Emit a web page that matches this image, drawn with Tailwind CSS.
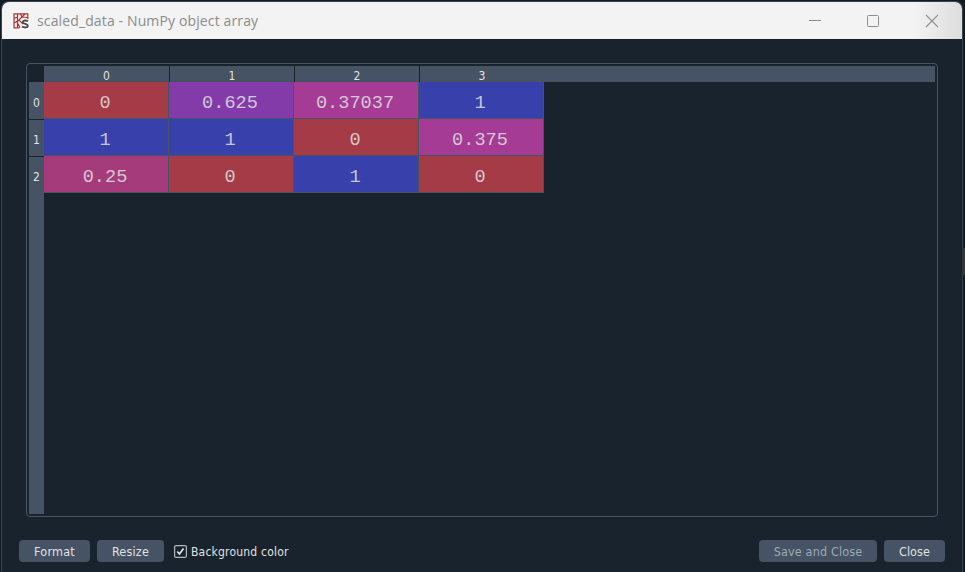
<!DOCTYPE html>
<html lang="en">
<head>
<meta charset="utf-8">
<title>scaled_data - NumPy object array</title>
<script src="https://cdn.jsdelivr.net/npm/@tailwindcss/browser@4"></script>
</head>
<body class="h-[572px] w-[965px] overflow-hidden bg-[#111b25] pt-px pl-px pr-[2px]">
<div class="flex h-[571px] w-[962px] flex-col overflow-hidden rounded-t-lg border border-b-0 border-[#3c424a] bg-[#19232d] font-['DejaVu_Sans_Condensed','DejaVu_Sans',sans-serif] text-[12px] text-[#e0e1e3]">
  <header class="flex h-[37px] shrink-0 items-center bg-linear-to-r from-[#f3f3f3] from-95% to-[#dddddd] pl-[9px]">
    <svg class="size-5 shrink-0" viewBox="0 0 20 20" fill="none">
      <rect width="20" height="20" rx="4" fill="#fafafa"/>
      <path d="M16.8 8V2.8H3V16.8H8.5M6.5 3V16.5M3 7.5L6.5 6M3 12L6.5 10M6.5 10.5L14 3M8 9L12 13M6.5 12L9 16.5M9.5 3L11 6L16.5 6.5" stroke="#b52b31" stroke-width="1.2"/>
      <path d="M17 10.2C14.6 8.9 11.8 9.4 11.8 11.2C11.8 13.2 16.8 12.4 16.8 14.7C16.8 16.8 13.4 16.8 11 15.7" stroke="#4c4c4c" stroke-width="1.9"/>
    </svg>
    <h1 class="ml-[6px] whitespace-nowrap font-['Open_Sans',sans-serif] text-[14px] leading-5 tracking-[.13px] text-[#8c8c8c]">scaled_data - NumPy object array</h1>
    <svg class="ml-auto mr-[24px] h-[14px] w-[130px] shrink-0" viewBox="0 0 130 14" fill="none" stroke="#8e8e8e">
      <path d="M1 6.5H13"/>
      <rect x="59.5" y="1.5" width="11" height="11" rx="1"/>
      <path d="M118 1L130 13M130 1L118 13" stroke-width="1.1"/>
    </svg>
  </header>
  <main class="mt-6 ml-6 flex h-[454px] w-[912px] shrink-0 flex-col rounded-[4px] border border-[#455364] p-[2px]">
    <div class="flex h-4 shrink-0 text-center leading-[20px]">
      <div class="w-[15px]"></div>
      <div class="flex flex-1 bg-[#455364]">
        <div class="w-[126px] border-r border-[#19232d]">0</div>
        <div class="w-[125px] border-r border-[#19232d]">1</div>
        <div class="w-[125px] border-r border-[#19232d]">2</div>
        <div class="w-[124px]">3</div>
      </div>
    </div>
    <div class="flex flex-1">
      <div class="w-[15px] bg-[#455364] text-center leading-[40px]">
        <div class="h-[38px] border-b border-[#19232d] leading-[42px]">0</div>
        <div class="h-[37px] border-b border-[#19232d]">1</div>
        <div class="h-[37px]">2</div>
      </div>
      <div class="grid h-[111px] grid-cols-[repeat(4,125px)] grid-rows-[repeat(3,37px)] text-center font-['Liberation_Mono',monospace] text-[18.6px] leading-[43px] text-[#e0e1e3]/85 *:border-r *:border-b *:border-[#455364] *:pr-[2px]">
        <div class="bg-[#a53b47]">0</div><div class="bg-[#833ba9]">0.625</div><div class="bg-[#a53b95]">0.37037</div><div class="bg-[#3841ab]">1</div>
        <div class="bg-[#3841ab]">1</div><div class="bg-[#3841ab]">1</div><div class="bg-[#a53b47]">0</div><div class="bg-[#a53b95]">0.375</div>
        <div class="bg-[#a53b7a]">0.25</div><div class="bg-[#a53b47]">0</div><div class="bg-[#3841ab]">1</div><div class="bg-[#a53b47]">0</div>
      </div>
    </div>
  </main>
  <footer class="mt-[23px] flex h-[22px] shrink-0 items-center pr-[17px] pl-[17px] whitespace-nowrap">
    <button class="h-[22px] w-[71px] rounded-[4px] bg-[#455364] pt-[2px] text-[12.5px] tracking-[.2px]">Format</button>
    <button class="ml-[7px] h-[22px] w-[67px] rounded-[4px] bg-[#455364] pt-[2px] text-[12.5px] tracking-[.2px]">Resize</button>
    <label class="ml-[10px] flex items-center">
      <svg class="mr-1 size-[13px]" viewBox="0 0 13 13" fill="none"><rect x=".6" y=".6" width="11.8" height="11.8" rx="1.5" stroke="#b5b9be" stroke-width="1.2"/><path d="M3.3 6.5L5.5 9L9.5 3.5" stroke="#e6e8ea" stroke-width="1.7"/></svg>
      <span class="pt-[2px] tracking-[.2px]">Background color</span>
    </label>
    <button class="ml-auto h-[22px] w-[118px] rounded-[4px] bg-[#455364] pt-[2px] text-[12.5px] tracking-[.15px] text-[#9da9b5]">Save and Close</button>
    <button class="ml-[7px] h-[22px] w-[61px] rounded-[4px] bg-[#455364] pt-[2px] text-[12.5px] tracking-[.1px]">Close</button>
  </footer>
</div>
<div class="absolute top-[248px] left-[962px] h-[27px] w-[3px] bg-[#30353a]"></div>
</body>
</html>
